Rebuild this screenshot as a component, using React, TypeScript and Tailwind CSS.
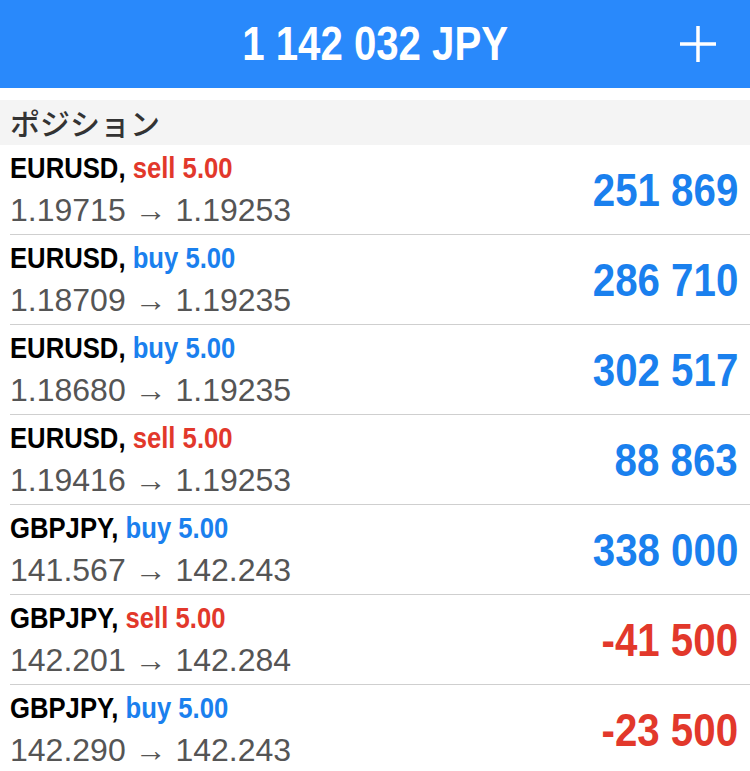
import React from 'react';

type Position = {
  symbol: string;
  side: 'buy' | 'sell';
  volume: string;
  open: string;
  current: string;
  profit: string;
};

const positions: Position[] = [
  { symbol: 'EURUSD', side: 'sell', volume: '5.00', open: '1.19715', current: '1.19253', profit: '251 869' },
  { symbol: 'EURUSD', side: 'buy', volume: '5.00', open: '1.18709', current: '1.19235', profit: '286 710' },
  { symbol: 'EURUSD', side: 'buy', volume: '5.00', open: '1.18680', current: '1.19235', profit: '302 517' },
  { symbol: 'EURUSD', side: 'sell', volume: '5.00', open: '1.19416', current: '1.19253', profit: '88 863' },
  { symbol: 'GBPJPY', side: 'buy', volume: '5.00', open: '141.567', current: '142.243', profit: '338 000' },
  { symbol: 'GBPJPY', side: 'sell', volume: '5.00', open: '142.201', current: '142.284', profit: '-41 500' },
  { symbol: 'GBPJPY', side: 'buy', volume: '5.00', open: '142.290', current: '142.243', profit: '-23 500' },
];

// condensed bold look: Arial-width font squeezed horizontally
const condensed = "inline-block font-['Liberation_Sans',Arial,sans-serif] font-bold";

const PositionRow: React.FC<{ p: Position }> = ({ p }) => {
  const negative = p.profit.startsWith('-');
  return (
    <div className="ml-[10px] flex h-[90px] items-center justify-between border-b border-[#cfcfcf] pr-[12px]">
      <div className="flex flex-col">
        <div className="h-[36px] leading-[35px]">
          <span className={`${condensed} origin-left scale-x-[0.885] whitespace-nowrap text-[29px] text-black`}>
            {p.symbol},{' '}
            <span className={p.side === 'sell' ? 'text-[#e2382b]' : 'text-[#1a80ee]'}>
              {p.side} {p.volume}
            </span>
          </span>
        </div>
        <div className="mt-[5px] font-['Liberation_Sans',Arial,sans-serif] text-[32px] leading-[36px] text-[#555555]">
          {p.open} → {p.current}
        </div>
      </div>
      <div
        className={`${condensed} origin-right scale-x-[0.875] text-[46px] leading-none ${negative ? 'text-[#e2382b]' : 'text-[#1a80ee]'}`}
      >
        {p.profit}
      </div>
    </div>
  );
};

export default function App() {
  return (
    <div className="min-h-screen w-[750px] bg-white">
      <header className="relative flex h-[88px] items-center justify-center bg-[#2989fb]">
        <h1 className={`${condensed} scale-x-[0.82] text-[49px] text-white`}>1 142 032 JPY</h1>
        <button className="absolute right-[34px] top-[26px] h-[36px] w-[36px]" aria-label="add">
          <svg viewBox="0 0 36 36" className="h-full w-full">
            <path d="M18 0v36M0 18h36" stroke="white" strokeWidth="3.5" />
          </svg>
        </button>
      </header>
      <div className="mt-[12px] flex h-[45px] items-center bg-[#f4f4f4] pl-[10px] font-['Noto_Sans_CJK_JP',sans-serif] text-[30px] font-medium text-[#333333]">
        ポジション
      </div>
      <div>
        {positions.map((p, i) => (
          <PositionRow key={i} p={p} />
        ))}
      </div>
    </div>
  );
}
